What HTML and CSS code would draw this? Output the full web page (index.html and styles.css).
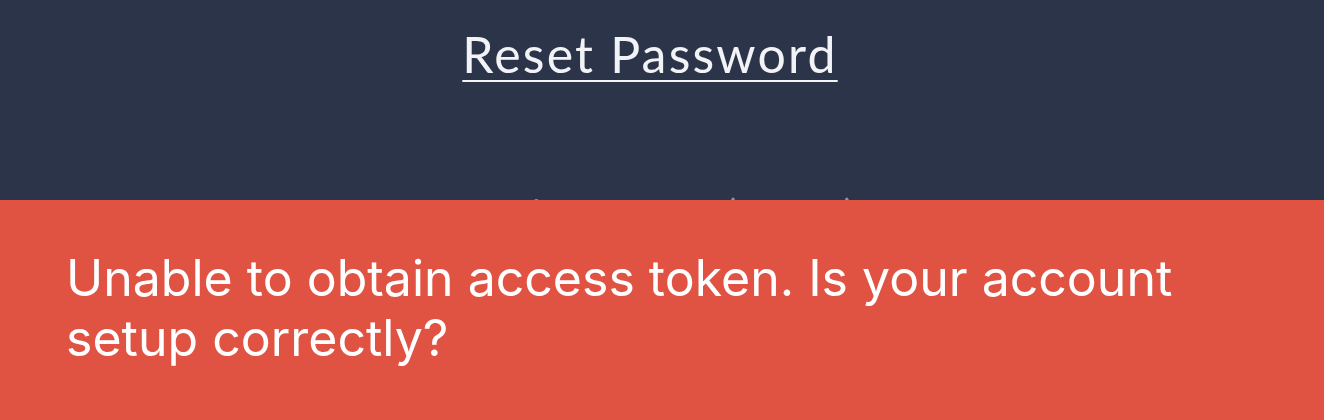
FILE: index.html
```html
<!DOCTYPE html>
<html lang="en">
<head>
    <meta charset="UTF-8">
    <title>Sign In</title>
    <link rel="stylesheet" href="styles.css">
</head>
<body>

<!-- Parte de baixo do ecrã de login -->
<div class="login-footer">
    <a class="reset-link" href="#">Reset Password</a>
    <p class="version">Version 1.0.0 (1055)</p>
</div>

<!-- Aviso de erro por cima do conteúdo -->
<div class="error-banner">
    <p>Unable to obtain access token. Is your account setup correctly?</p>
</div>

</body>
</html>
```

FILE: styles.css
```css
body {
    margin: 0;
    padding: 0;
    background-color: #2c344a;
    font-family: Lato, "Open Sans", sans-serif;
    color: #ffffff;
    overflow: hidden;
}

.login-footer {
    display: flex;
    flex-direction: column;
    align-items: center;
    padding-top: 22px;
    padding-right: 24px;
}

.reset-link {
    color: #f2f3f6;
    font-size: 50px;
    line-height: 64px;
    letter-spacing: 2.2px;
    text-decoration: underline;
    text-decoration-thickness: 2px;
    text-underline-offset: 7px;
}

.version {
    margin: 0;
    margin-top: 104px;
    font-size: 40px;
    letter-spacing: 3px;
    color: #8e95a3;
}

/* Faixa vermelha fixa na parte de baixo */
.error-banner {
    position: fixed;
    left: 0;
    right: 0;
    bottom: 0;
    height: 220px;
    box-sizing: border-box;
    padding: 48px 66px 0 66px;
    background-color: #e05242;
}

.error-banner p {
    margin: 0;
    max-width: 1160px;
    font-family: Inter, "Open Sans", sans-serif;
    font-size: 50px;
    line-height: 60px;
    color: #ffffff;
}
```
